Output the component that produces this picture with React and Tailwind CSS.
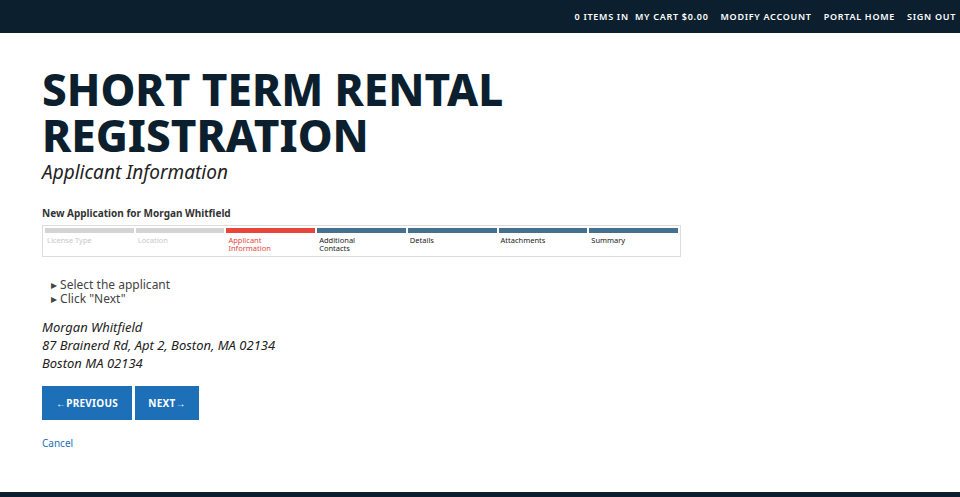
export default function App() {
  const steps = [
    { label: "License Type", bar: "bg-[#d4d4d4]", text: "text-[#c8c8c8]" },
    { label: "Location", bar: "bg-[#d4d4d4]", text: "text-[#c8c8c8]" },
    { label: "Applicant Information", bar: "bg-[#e8463c]", text: "text-[#e8463c]" },
    { label: "Additional Contacts", bar: "bg-[#45708f]", text: "text-[#222]" },
    { label: "Details", bar: "bg-[#45708f]", text: "text-[#222]" },
    { label: "Attachments", bar: "bg-[#45708f]", text: "text-[#222]" },
    { label: "Summary", bar: "bg-[#45708f]", text: "text-[#222]" },
  ];
  return (
    <div className="w-[960px] h-[497px] bg-white flex flex-col overflow-hidden font-['Open_Sans',sans-serif]">
      <div className="h-[33px] bg-[#0c1f2e] flex items-center justify-end pr-[4px] gap-[12px] text-white text-[9px] font-semibold tracking-[0.08em] font-['Inter',sans-serif]">
        <span>0 ITEMS IN&nbsp; MY CART $0.00</span>
        <span>MODIFY ACCOUNT</span>
        <span>PORTAL HOME</span>
        <span>SIGN OUT</span>
      </div>
      <div className="flex-1 px-[42px] pt-[33px]">
        <h1 className="text-[#0c1f2e] text-[44px] leading-[46px] font-extrabold font-['Inter',sans-serif]">
          SHORT TERM RENTAL<br />REGISTRATION
        </h1>
        <div className="text-[19px] leading-[24px] italic text-[#222] mt-[2px] font-['Liberation_Serif',serif]">Applicant Information</div>
        <div className="mt-[22px] text-[10px] font-bold text-[#333] font-['Liberation_Serif',serif]">New Application for Morgan Whitfield</div>
        <div className="mt-[4px] w-[639px] h-[32px] border border-[#ddd] px-[2px] pt-[2px] grid grid-cols-7 gap-[2px]">
          {steps.map((s) => (
            <div key={s.label}>
              <div className={`h-[5px] ${s.bar}`} />
              <div className={`text-[7.5px] leading-[8px] mt-[3px] pl-[2px] pr-[36px] ${s.label === "Additional Contacts" ? "pr-0" : ""} ${s.text}`}>{s.label}</div>
            </div>
          ))}
        </div>
        <div className="mt-[21px] ml-[9px] text-[12px] leading-[14px] text-[#444] font-['Liberation_Serif',serif]">
          <div>▸ Select the applicant</div>
          <div>▸ Click "Next"</div>
        </div>
        <div className="mt-[12px] text-[13px] leading-[18px] italic text-[#222] font-['Liberation_Serif',serif]">
          <div>Morgan Whitfield</div>
          <div>87 Brainerd Rd, Apt 2, Boston, MA 02134</div>
          <div>Boston MA 02134</div>
        </div>
        <div className="mt-[14px] flex gap-[3px] font-['Inter',sans-serif]">
          <button className="h-[34px] w-[90px] bg-[#1d6fb8] text-white text-[10px] font-bold tracking-wide">←PREVIOUS</button>
          <button className="h-[34px] w-[64px] bg-[#1d6fb8] text-white text-[10px] font-bold tracking-wide">NEXT→</button>
        </div>
        <div className="mt-[16px] text-[10px] text-[#1d6fb8] font-['Liberation_Serif',serif]">Cancel</div>
      </div>
      <div className="h-[5px] bg-[#0c1f2e]" />
    </div>
  );
}
